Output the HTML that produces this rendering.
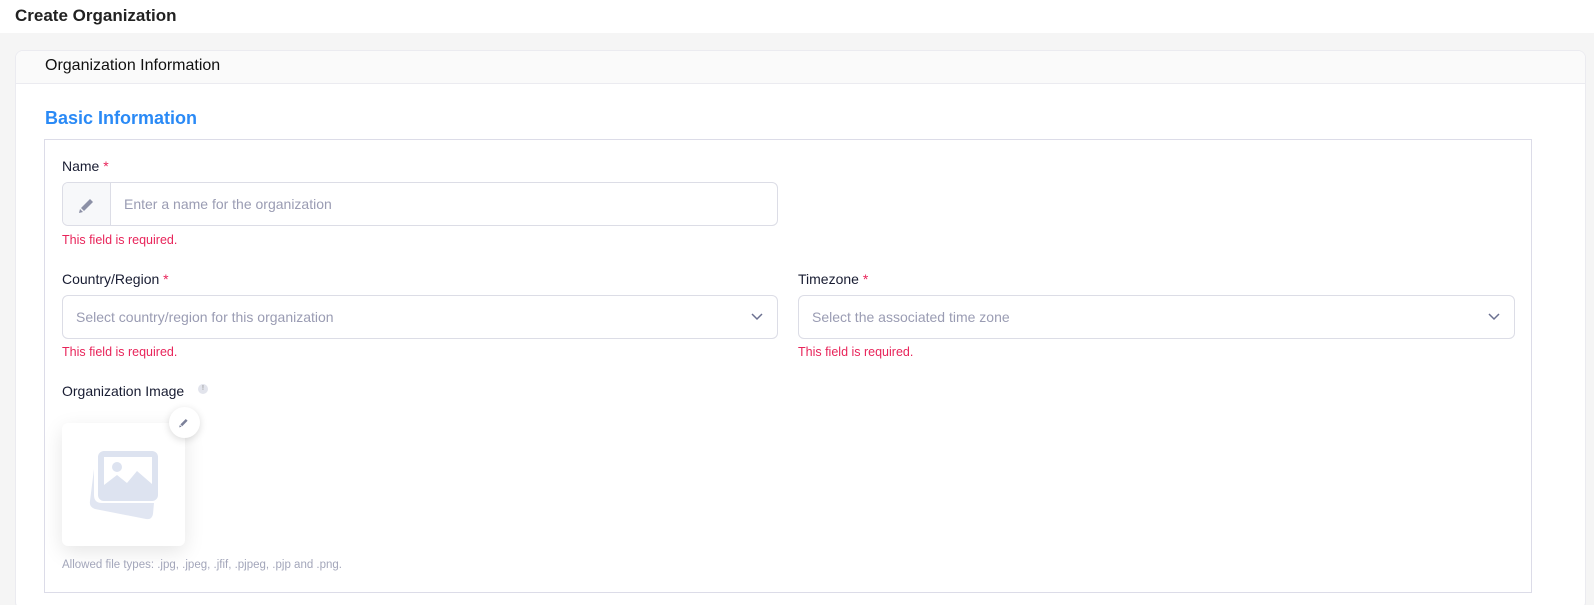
<!DOCTYPE html>
<html style="width:1594px;height:605px;overflow:hidden"><head><style>
*{box-sizing:border-box;margin:0;padding:0}
body{width:1594px;height:605px;overflow:hidden;background:#f5f5f5;font-family:"Liberation Sans",sans-serif;color:#181c32;position:relative}
.top{position:absolute;left:0;top:0;width:1594px;height:33px;background:#fff}
.top span{position:absolute;left:15px;top:6px;font-size:17px;font-weight:bold;color:#222}
.card{position:absolute;left:15px;top:50px;width:1571px;height:560px;background:#fff;border:1px solid #ebebf0;border-radius:8px;overflow:hidden}
.hdr{height:33px;background:#fafafa;border-bottom:1px solid #ebebf0;padding:6px 0 0 29px;font-size:16px;color:#111}
.abs{position:absolute}
.lbl{font-size:14px;color:#181c32}
.req{color:#e8245a}
.err{font-size:12.5px;color:#e8245a}
.inp{border:1px solid #dcdde6;border-radius:6px;height:44px;background:#fff}
.ph{font-size:14px;color:#9a9cb3}
</style></head><body>
<div class="top"><span>Create Organization</span></div>
<div class="card"><div class="hdr">Organization Information</div></div>
<div class="abs" style="left:45px;top:108px;font-size:18px;font-weight:bold;color:#2a8af6">Basic Information</div>
<div class="abs" style="left:44px;top:139px;width:1488px;height:454px;border:1px solid #dcdce8;background:#fff"></div>

<div class="abs lbl" style="left:62px;top:158px">Name <span class="req">*</span></div>
<div class="abs inp" style="left:62px;top:182px;width:716px;overflow:hidden">
  <div style="position:absolute;left:0;top:0;width:48px;height:42px;background:#f7f8fa;border-right:1px solid #dcdde6">
    <svg width="20" height="20" viewBox="0 0 20 20" style="position:absolute;left:14px;top:11px"><path d="M4 14 L13 5 L16 8 L7 17 Z" fill="#8c90a6"/><path d="M3 15 L6 18 L2 19 Z" fill="#8c90a6"/></svg>
  </div>
  <div class="abs ph" style="left:61px;top:13px">Enter a name for the organization</div>
</div>
<div class="abs err" style="left:62px;top:233px">This field is required.</div>

<div class="abs lbl" style="left:62px;top:271px">Country/Region <span class="req">*</span></div>
<div class="abs inp" style="left:62px;top:295px;width:716px">
  <div class="abs ph" style="left:13px;top:13px">Select country/region for this organization</div>
  <svg class="abs" style="right:14px;top:16px" width="12" height="10"><path d="M1 2 L6 7 L11 2" stroke="#6b7090" stroke-width="1.5" fill="none"/></svg>
</div>
<div class="abs err" style="left:62px;top:345px">This field is required.</div>

<div class="abs lbl" style="left:798px;top:271px">Timezone <span class="req">*</span></div>
<div class="abs inp" style="left:798px;top:295px;width:717px">
  <div class="abs ph" style="left:13px;top:13px">Select the associated time zone</div>
  <svg class="abs" style="right:14px;top:16px" width="12" height="10"><path d="M1 2 L6 7 L11 2" stroke="#6b7090" stroke-width="1.5" fill="none"/></svg>
</div>
<div class="abs err" style="left:798px;top:345px">This field is required.</div>

<div class="abs lbl" style="left:62px;top:383px">Organization Image</div>
<div class="abs" style="left:198px;top:384px;width:10px;height:10px;border-radius:50%;background:#e2e4ec;font-size:7px;color:#888;text-align:center;line-height:10px">!</div>
<div class="abs" style="left:62px;top:423px;width:123px;height:123px;border-radius:6px;background:#fff;box-shadow:0 6px 20px rgba(0,0,0,0.1)">
  <svg width="123" height="123" viewBox="0 0 123 123">
    <path d="M32 46 L28 78 Q27 84 33 86 L84 96 Q90 97 91 91 L92 80 L40 80 Q32 80 32 72 Z" fill="#e1e6f2"/>
    <rect x="36" y="28" width="60" height="50" rx="6" fill="#dde3f0"/>
    <rect x="42" y="34" width="48" height="35" fill="#fff"/>
    <circle cx="55" cy="44" r="5" fill="#dde3f0"/>
    <path d="M42 69 L42 62 L55 52 L65 60 L75 48 L90 61 L90 69 Z" fill="#dde3f0"/>
  </svg>
</div>
<div class="abs" style="left:169px;top:407px;width:31px;height:31px;border-radius:50%;background:#fff;box-shadow:0 2px 8px rgba(0,0,0,0.15)">
  <svg width="12" height="12" viewBox="0 0 20 20" style="position:absolute;left:9px;top:9px"><path d="M4 14 L13 5 L16 8 L7 17 Z" fill="#7b8099"/><path d="M3 15 L6 18 L2 19 Z" fill="#7b8099"/></svg>
</div>
<div class="abs" style="left:62px;top:559px;font-size:11.5px;color:#a3a6ba">Allowed file types: .jpg, .jpeg, .jfif, .pjpeg, .pjp and .png.</div>
</body></html>
